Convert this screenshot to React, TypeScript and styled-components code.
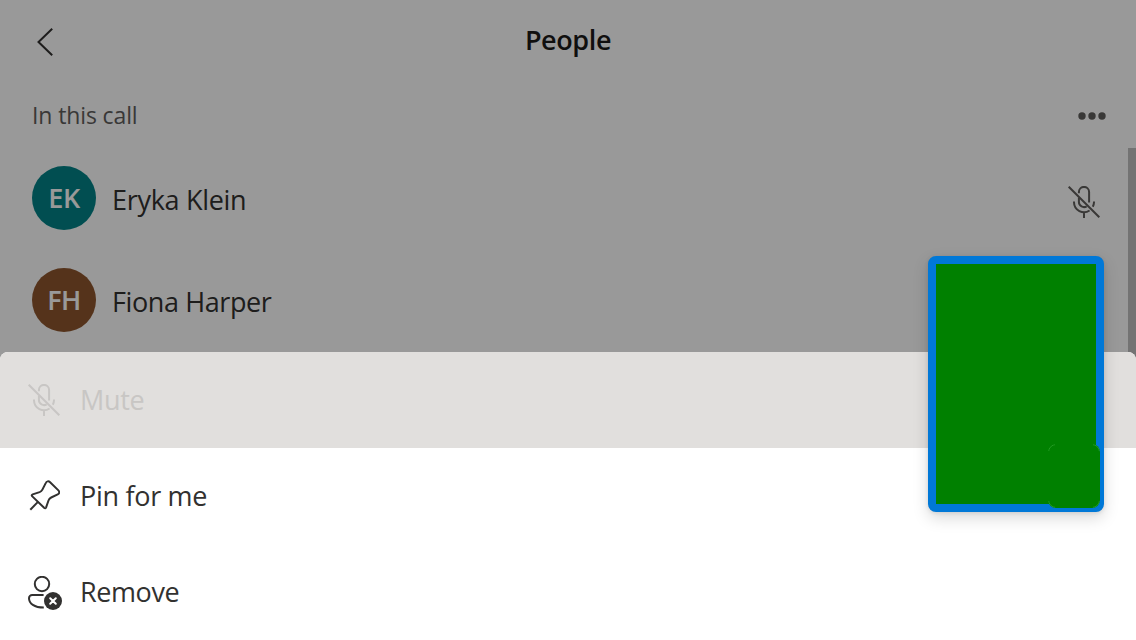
import React from "react";
import styled, { createGlobalStyle } from "styled-components";

const GlobalStyle = createGlobalStyle`
  * { box-sizing: border-box; }
  body { margin: 0; background: #fff; font-family: "Open Sans", "Noto Sans", sans-serif; overflow: hidden; }
  svg { display: block; }
`;

const Screen = styled.div`
  position: relative;
  width: 1136px;
  height: 640px;
  overflow: hidden;
  background: #fff;
`;

const Header = styled.header`
  display: grid;
  grid-template-columns: 60px 1fr 60px;
  align-items: center;
  height: 84px;
  padding: 0 16px;
`;

const BackButton = styled.button`
  display: flex;
  align-items: center;
  justify-content: center;
  height: 60px;
  padding: 0 2px 0 0;
  border: 0;
  background: none;
  color: #323130;
`;

const Label = styled.span<{ $spacing?: number; $size?: number }>`
  font-size: ${(p) => p.$size ?? 27}px;
  line-height: 36px;
  letter-spacing: ${(p) => p.$spacing ?? -0.3}px;
  white-space: nowrap;
`;

const Title = styled.h1`
  margin: 0;
  padding-bottom: 5px;
  text-align: center;
  font-size: 27px;
  line-height: 36px;
  font-weight: 600;
  letter-spacing: -0.4px;
  color: #1b1a19;
`;

const SectionBar = styled.div`
  display: flex;
  align-items: center;
  justify-content: space-between;
  height: 64px;
  padding: 0 30px 0 32px;
  color: #605e5c;
`;

const SectionTitle = styled.div`
  padding-bottom: 2px;
`;

const ListArea = styled.div`
  display: flex;
  height: 492px;
`;

const List = styled.div`
  flex: 1;
`;

const ScrollThumb = styled.div`
  width: 8px;
  background: #c0c0c0;
`;

const Person = styled.div`
  display: flex;
  align-items: center;
  gap: 16px;
  height: 102px;
  padding: 0 28px 2px 32px;
  color: #323130;
`;

const PersonName = styled.div`
  flex: 1;
  padding-top: 3px;
`;

const Avatar = styled.div<{ $color: string }>`
  display: flex;
  align-items: center;
  justify-content: center;
  width: 64px;
  height: 64px;
  padding-bottom: 2px;
  border-radius: 50%;
  background: ${(p) => p.$color};
  color: #fff;
  font-size: 27px;
  font-weight: 600;
  letter-spacing: -0.5px;
`;

const MicSlot = styled.div`
  padding-top: 8px;
  color: #605e5c;
`;

const Scrim = styled.div`
  position: absolute;
  inset: 0;
  display: flex;
  flex-direction: column;
  justify-content: flex-end;
  background: rgba(0, 0, 0, 0.4);
`;

const Sheet = styled.div`
  height: 288px;
  overflow: hidden;
  border-radius: 8px 8px 0 0;
  background: #fff;
`;

const Action = styled.div<{ $disabled?: boolean }>`
  display: flex;
  align-items: center;
  gap: 16px;
  height: 96px;
  padding-left: 26px;
  background: ${(p) => (p.$disabled ? "#e1dfdd" : "#fff")};
  color: ${(p) => (p.$disabled ? "#c8c6c4" : "#323130")};
`;

const ActionIcon = styled.div<{ $drop?: number }>`
  display: flex;
  width: 38px;
  padding-left: 2px;
  padding-top: ${(p) => p.$drop ?? 0}px;
`;

const VideoTile = styled.div`
  position: absolute;
  left: 928px;
  top: 256px;
  width: 176px;
  height: 256px;
  border: 8px solid #0078d7;
  border-radius: 8px;
  background: #008000;
  background-clip: padding-box;
  box-shadow: 0 6px 16px rgba(0, 0, 0, 0.15), 0 1px 4px rgba(0, 0, 0, 0.1);
`;

const VideoBadge = styled.div`
  position: absolute;
  right: -4px;
  bottom: -4px;
  width: 52px;
  height: 64px;
  border-radius: 8px;
  background: #008000;

  &::after {
    content: "";
    position: absolute;
    inset: 0;
    border: 1px solid rgba(60, 175, 60, 0.6);
    border-radius: 8px;
    mask:
      linear-gradient(#000 0 0) 0 0 / 7px 7px no-repeat,
      linear-gradient(#000 0 0) 100% 0 / 7px 7px no-repeat,
      linear-gradient(#000 0 0) 0 100% / 7px 7px no-repeat,
      linear-gradient(#000 0 0) 100% 100% / 7px 7px no-repeat;
  }
`;

const MicOffIcon = () => (
  <svg width="32" height="32" viewBox="0 0 32 32" fill="none" stroke="currentColor" strokeWidth="2">
    <path d="M.7.7 31.3 31.3" />
    <path d="M10.9 7.2V6a5.1 5.1 0 0 1 10.2 0v10.5" />
    <path d="M10.9 11.8V16a5.1 5.1 0 0 0 7.8 4.3" />
    <path d="M6 15.5v.8a10 10 0 0 0 15.6 8.2M26 15.5v.8a10 10 0 0 1-1.2 4.5M16 26.2V32" />
  </svg>
);

const PinIcon = () => (
  <svg width="32" height="32" viewBox="0 0 32 32" fill="none" stroke="currentColor" strokeWidth="2" strokeLinejoin="round">
    <path d="M22.1 2.3 30.4 10.4C31.8 11.8 31.4 13.5 29.7 14.4L23.2 17.5Q21.2 18.5 20.5 20.5L18.1 27.3Q17.4 29 16.1 27.8L4.3 16.4Q3 15.1 4.7 14.4L11.6 12.1Q13.5 11.4 14.4 9.6L17.7 3.1C18.6 1.1 20.6.8 22.1 2.3Z" />
    <path d="M10.2 21.6 2.3 29.8" />
  </svg>
);

const RemoveIcon = () => (
  <svg width="34" height="34" viewBox="0 0 34 34" fill="none" stroke="currentColor" strokeWidth="2">
    <circle cx="14" cy="8" r="7.2" />
    <path d="M15.6 19H4.2A3.2 3.2 0 0 0 1 22.2C1 27.6 6.4 31.6 15.8 31.6" />
    <circle cx="25" cy="25" r="9" fill="currentColor" stroke="none" />
    <path d="m22.2 22.2 5.6 5.6m0-5.6-5.6 5.6" stroke="#fff" strokeLinecap="round" />
  </svg>
);

export default function App() {
  return (
    <Screen>
      <GlobalStyle />
      <Header>
        <BackButton aria-label="Back">
          <svg width="18" height="30" viewBox="0 0 18 30" fill="none" stroke="currentColor" strokeWidth="2">
            <path d="M16.2 1.7 2.5 15l13.7 13.3" />
          </svg>
        </BackButton>
        <Title>People</Title>
      </Header>
      <SectionBar>
        <SectionTitle><Label $size={23} $spacing={-0.12}>In this call</Label></SectionTitle>
        <svg width="28" height="8" viewBox="0 0 28 8" fill="currentColor">
          <circle cx="4" cy="4" r="3.7" />
          <circle cx="14" cy="4" r="3.7" />
          <circle cx="24" cy="4" r="3.7" />
        </svg>
      </SectionBar>
      <ListArea>
        <List>
          <Person>
            <Avatar $color="#038387">EK</Avatar>
            <PersonName><Label>Eryka Klein</Label></PersonName>
            <MicSlot><MicOffIcon /></MicSlot>
          </Person>
          <Person>
            <Avatar $color="#8e562e">FH</Avatar>
            <PersonName><Label $spacing={-0.4}>Fiona Harper</Label></PersonName>
          </Person>
        </List>
        <ScrollThumb />
      </ListArea>
      <Scrim>
        <Sheet>
          <Action $disabled>
            <ActionIcon><MicOffIcon /></ActionIcon>
            <Label>Mute</Label>
          </Action>
          <Action>
            <ActionIcon><PinIcon /></ActionIcon>
            <Label>Pin for me</Label>
          </Action>
          <Action>
            <ActionIcon $drop={2}><RemoveIcon /></ActionIcon>
            <Label $spacing={-0.4}>Remove</Label>
          </Action>
        </Sheet>
      </Scrim>
      <VideoTile><VideoBadge /></VideoTile>
    </Screen>
  );
}
